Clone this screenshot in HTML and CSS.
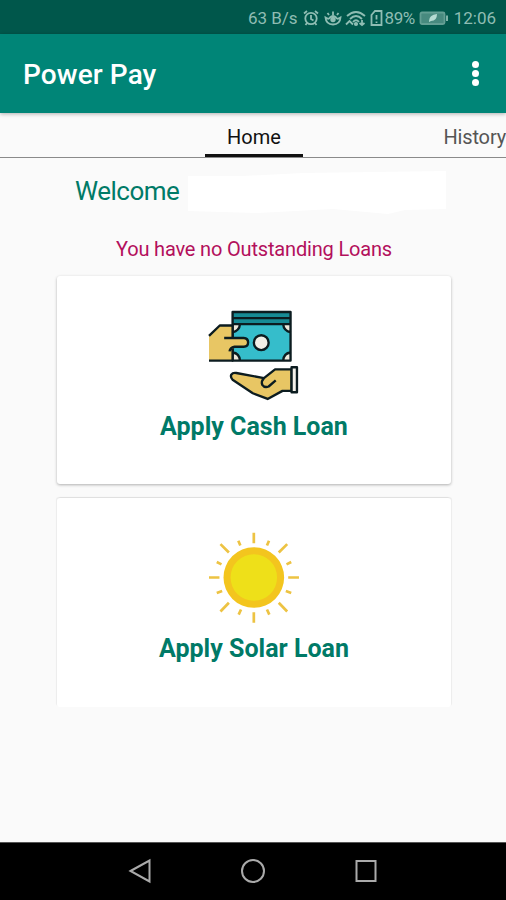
FILE: index.html
```html
<!DOCTYPE html>
<html lang="en">
<head>
    <meta charset="UTF-8" />
    <meta name="viewport" content="width=device-width, initial-scale=1" />
    <title>Power Pay</title>
    <link rel="stylesheet" href="styles.css">
</head>
<body>
    <div class="status-bar">
        <span class="speed">63 B/s</span>
        <svg class="icon-alarm" width="16" height="18" viewBox="0 0 16 18">
            <circle cx="8" cy="9.5" r="5.7" />
            <path d="M8 6v4l2.5 1.5M1 4.5L4 2M15 4.5L12 2M4 14l-1.5 2M12 14l1.5 2" />
        </svg>
        <svg class="icon-eye" width="18" height="18" viewBox="0 0 18 18">
            <path d="M1.5 8.5Q2 15.5 9 15.5Q16 15.5 16.5 8.5Q13 11 12 8.5Q9 5.5 6 8.5Q5 11 1.5 8.5zM9 6V2.5M5 6L3.5 4M13 6l1.5-2" />
            <circle class="solid" cx="9" cy="10.5" r="1.8" />
        </svg>
        <svg class="icon-wifi" width="21" height="18" viewBox="0 0 21 18">
            <path d="M2 7Q11 -1 20 7M5 10Q11 4 17 10M8 13q3-3.5 6 0M1 15.5l3.5-3.5 3.5 3.5M17 11v5M14.5 14l2.5 2 2.5-2" />
            <circle class="solid" cx="11" cy="15" r="1.2" />
        </svg>
        <svg class="icon-sim" width="13" height="18" viewBox="0 0 13 18">
            <path d="M5 2h6.5v14h-10V6zM6.5 6v4.5M6.5 12.5v1.5" />
        </svg>
        <span class="percent">89%</span>
        <svg class="icon-battery" width="30" height="18" viewBox="0 0 30 18">
            <rect class="level" x="1.5" y="3.5" width="24" height="11.5" rx="1.5" />
            <path d="M28 6.5v5.5" />
            <path class="leaf" d="M10 12q0-6 8-7q0 7-6 7l-2 1z" />
        </svg>
        <span class="clock">12:06</span>
    </div>

    <div class="app-bar">
        <h1>Power Pay</h1>
        <div class="menu"><i></i><i></i><i></i></div>
    </div>

    <div class="tabs">
        <div class="tab active">Home</div>
        <div class="tab history">History</div>
    </div>

    <div class="content">
        <div class="welcome">
            <span>Welcome</span>
            <svg class="name" width="264" height="48" viewBox="0 0 264 48">
                <path d="M5 8L60 8L120 5L263 3V41L222 42L205 46L150 41L75 45L5 43z" />
            </svg>
        </div>
        <p class="notice">You have no Outstanding Loans</p>

        <div class="card">
            <svg class="picture" width="93" height="93" viewBox="41 27 276 276">
                <!-- bank notes -->
                <path d="M114 36H286V72H114z" fill="#168b95" />
                <path d="M114 72H286V180H114z" fill="#35bdcb" />
                <path d="M114 72h22q-2 20-22 24zM286 72h-22q2 20 22 24zM114 180v-24q20 2 22 24zM286 180v-24q-20 2-22 24z" fill="#eee9dc" />
                <path d="M114 36H286V180H114zM114 54H286M114 72H286M136 72q-2 20-22 24M264 72q2 20 22 24M114 156q20 2 22 24M286 156q-20 2-22 24" class="line" />
                <circle cx="199" cy="127" r="22" fill="#f2efe7" class="line" />
                <!-- giving hand -->
                <path d="M44 107L76 76H114V113H147Q160 114 160 126Q160 139 147 139H120L114 146V180H44z" fill="#e8c664" />
                <path d="M44 107L76 76H114M89 113H147Q160 114 160 126Q160 139 147 139H120Q106 142 105 153M114 146V180M114 72V113M44 180H116" class="line" />
                <!-- receiving hand -->
                <path d="M207 232L240 206H289V270H262L218 294L174 277L114 237Q107 230 110 222Q115 215 125 217L207 232z" fill="#e8c664" class="line" />
                <path d="M207 232Q198 242 202 252Q209 262 221 257L242 239" class="line" />
                <path d="M289 200H305V274H289z" fill="#f4f1ea" class="line" />
            </svg>
            <h2>Apply Cash Loan</h2>
        </div>

        <div class="card flat">
            <svg class="picture" width="93" height="93" viewBox="40 21 276 276">
                <g class="rays">
                    <path d="M176 26V57M176 262V293M43 159H74M278 159H310M77 60L102 85M275 60L250 85M77 260L102 234M275 260L250 234" />
                    <path d="M130 50L136 64M221 50L215 64M66 113L80 120M287 113L273 120M66 205L82 199M287 205L271 199M131 269L138 254M222 269L215 254" />
                </g>
                <circle cx="176" cy="159" r="90" fill="#f3c51e" />
                <circle cx="176" cy="159" r="69" fill="#eee019" />
            </svg>
            <h2>Apply Solar Loan</h2>
        </div>
    </div>

    <div class="nav-bar">
        <svg width="26" height="26" viewBox="0 0 26 26"><path d="M3.5 13L22.5 2.5V23.5z" /></svg>
        <svg width="26" height="26" viewBox="0 0 26 26"><circle cx="13" cy="13" r="11" /></svg>
        <svg width="26" height="26" viewBox="0 0 26 26"><rect x="3.5" y="3" width="19" height="20" /></svg>
    </div>
</body>
</html>
```

FILE: styles.css
```css
* {
    box-sizing: border-box;
}
body {
    margin: 0;
    height: 900px;
    display: flex;
    flex-direction: column;
    overflow: hidden;
    font-family: Roboto, sans-serif;
    background-color: #fafafa;
}
h1, h2, p {
    margin: 0;
}
.status-bar {
    height: 34px;
    padding: 2px 10px 0 0;
    display: flex;
    justify-content: flex-end;
    align-items: center;
    background-color: #00574b;
    color: #8fbdb3;
    font-size: 17px;
}
.status-bar svg {
    fill: none;
    stroke: #8fbdb3;
    stroke-width: 1.8;
}
.status-bar .solid {
    fill: #8fbdb3;
}
.speed {
    margin-right: 5px;
}
.icon-alarm {
    margin-right: 5px;
}
.icon-eye {
    margin-right: 3px;
}
.icon-wifi {
    margin-right: 4px;
}
.percent {
    margin: 0 4px 0 2px;
    letter-spacing: -0.5px;
}
.icon-battery {
    margin-right: 5px;
}
.status-bar .level {
    fill: #478a7f;
    stroke: #639f94;
}
.status-bar .leaf {
    fill: #b5dcd3;
    stroke: none;
}
.app-bar {
    height: 79px;
    padding: 2px 27px 0 23px;
    display: flex;
    justify-content: space-between;
    align-items: center;
    background-color: #008577;
    color: white;
    box-shadow: 0 1px 4px rgba(0,0,0,0.3);
}
.app-bar h1 {
    font-size: 28px;
    font-weight: 500;
    letter-spacing: 0.1px;
}
.menu {
    display: grid;
    gap: 2px;
    padding-bottom: 3px;
}
.menu i {
    width: 7px;
    height: 7px;
    border-radius: 50%;
    background-color: white;
}
.tabs {
    height: 45px;
    padding-left: 205px;
    display: flex;
    justify-content: space-between;
    border-bottom: 1px solid #8a8a8a;
}
.tab {
    height: 44px;
    padding-top: 12px;
    font-size: 20px;
    line-height: 24px;
    color: #555;
    white-space: nowrap;
}
.tab.active {
    width: 98px;
    text-align: center;
    color: #111;
    border-bottom: 3px solid #111;
}
.tab.history {
    letter-spacing: -0.15px;
}
.content {
    flex: 1;
    padding: 9px 55px 0 57px;
}
.welcome {
    height: 46px;
    padding: 1px 0 0 18px;
    display: flex;
    color: #007a67;
    font-size: 26px;
    line-height: 46px;
    letter-spacing: -0.5px;
}
.name {
    margin-left: 4px;
    fill: #fff;
}
.notice {
    margin-top: 24px;
    text-align: center;
    font-size: 20px;
    line-height: 24px;
    letter-spacing: -0.17px;
    color: #b3105c;
}
.card {
    height: 208px;
    margin-top: 15px;
    padding-top: 33px;
    display: flex;
    flex-direction: column;
    align-items: center;
    background-color: white;
    border-radius: 3px;
    box-shadow: 0 1px 3px rgba(0,0,0,0.3);
}
.card + .card {
    margin-top: 14px;
}
.card.flat {
    height: 209px;
    box-shadow: -1px -1px 1px rgba(0,0,0,0.06), 1px -1px 1px rgba(0,0,0,0.06);
}
.card h2 {
    margin-top: 9px;
    font-size: 25px;
    line-height: 32px;
    font-weight: 700;
    color: #007a67;
}
.picture .line {
    stroke: #0c1c20;
    stroke-width: 7;
    stroke-linejoin: round;
}
.picture path.line:not([fill]) {
    fill: none;
}
.rays {
    fill: none;
    stroke: #edc343;
    stroke-width: 8;
}
.nav-bar {
    height: 58px;
    padding-bottom: 2px;
    display: flex;
    justify-content: center;
    align-items: center;
    gap: 87px;
    background-color: black;
    border-top: 1px solid #555;
}
.nav-bar svg {
    fill: none;
    stroke: #aaa;
    stroke-width: 2;
}
```
